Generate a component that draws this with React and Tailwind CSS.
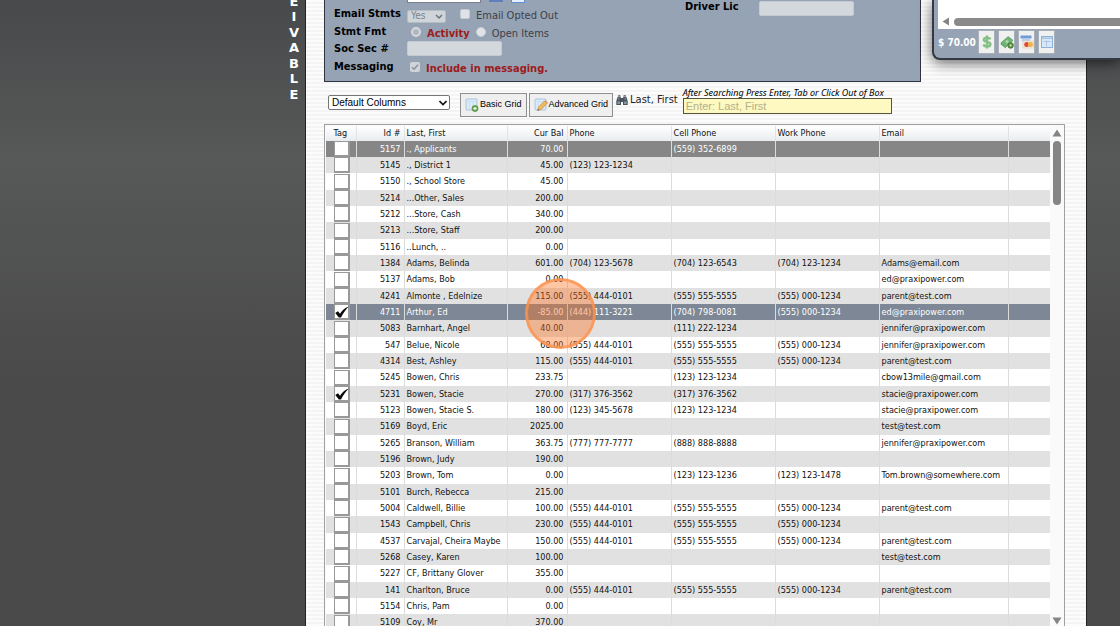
// ============================================================
// Accounts Receivable – Customer Detail and Grid
// ============================================================

const customers = [
  { id: 5157, name: '., Applicants', bal: '70.00', cell: '(559) 352-6899', current: true },
  { id: 5145, name: '., District 1', bal: '45.00', phone: '(123) 123-1234' },
  { id: 5150, name: '., School Store', bal: '45.00' },
  { id: 5214, name: '...Other, Sales', bal: '200.00' },
  { id: 5212, name: '...Store, Cash', bal: '340.00' },
  { id: 5213, name: '...Store, Staff', bal: '200.00' },
  { id: 5116, name: '..Lunch, ..', bal: '0.00' },
  { id: 1384, name: 'Adams, Belinda', bal: '601.00', phone: '(704) 123-5678', cell: '(704) 123-6543', work: '(704) 123-1234', email: 'Adams@email.com' },
  { id: 5137, name: 'Adams, Bob', bal: '0.00', email: 'ed@praxipower.com' },
  { id: 4241, name: 'Almonte , Edelnize', bal: '115.00', phone: '(555) 444-0101', cell: '(555) 555-5555', work: '(555) 000-1234', email: 'parent@test.com' },
  { id: 4711, name: 'Arthur, Ed', bal: '-85.00', phone: '(444) 111-3221', cell: '(704) 798-0081', work: '(555) 000-1234', email: 'ed@praxipower.com', tagged: true, active: true },
  { id: 5083, name: 'Barnhart, Angel', bal: '40.00', cell: '(111) 222-1234', email: 'jennifer@praxipower.com' },
  { id: 547, name: 'Belue, Nicole', bal: '68.00', phone: '(555) 444-0101', cell: '(555) 555-5555', work: '(555) 000-1234', email: 'jennifer@praxipower.com' },
  { id: 4314, name: 'Best, Ashley', bal: '115.00', phone: '(555) 444-0101', cell: '(555) 555-5555', work: '(555) 000-1234', email: 'parent@test.com' },
  { id: 5245, name: 'Bowen, Chris', bal: '233.75', cell: '(123) 123-1234', email: 'cbow13mile@gmail.com' },
  { id: 5231, name: 'Bowen, Stacie', bal: '270.00', phone: '(317) 376-3562', cell: '(317) 376-3562', email: 'stacie@praxipower.com', tagged: true },
  { id: 5123, name: 'Bowen, Stacie S.', bal: '180.00', phone: '(123) 345-5678', cell: '(123) 123-1234', email: 'stacie@praxipower.com' },
  { id: 5169, name: 'Boyd, Eric', bal: '2025.00', email: 'test@test.com' },
  { id: 5265, name: 'Branson, William', bal: '363.75', phone: '(777) 777-7777', cell: '(888) 888-8888', email: 'jennifer@praxipower.com' },
  { id: 5196, name: 'Brown, Judy', bal: '190.00' },
  { id: 5203, name: 'Brown, Tom', bal: '0.00', cell: '(123) 123-1236', work: '(123) 123-1478', email: 'Tom.brown@somewhere.com' },
  { id: 5101, name: 'Burch, Rebecca', bal: '215.00' },
  { id: 5004, name: 'Caldwell, Billie', bal: '100.00', phone: '(555) 444-0101', cell: '(555) 555-5555', work: '(555) 000-1234', email: 'parent@test.com' },
  { id: 1543, name: 'Campbell, Chris', bal: '230.00', phone: '(555) 444-0101', cell: '(555) 555-5555', work: '(555) 000-1234' },
  { id: 4537, name: 'Carvajal, Cheira Maybe', bal: '150.00', phone: '(555) 444-0101', cell: '(555) 555-5555', work: '(555) 000-1234', email: 'parent@test.com' },
  { id: 5268, name: 'Casey, Karen', bal: '100.00', email: 'test@test.com' },
  { id: 5227, name: 'CF, Brittany Glover', bal: '355.00' },
  { id: 141, name: 'Charlton, Bruce', bal: '0.00', phone: '(555) 444-0101', cell: '(555) 555-5555', work: '(555) 000-1234', email: 'parent@test.com' },
  { id: 5154, name: 'Chris, Pam', bal: '0.00' },
  { id: 5109, name: 'Coy, Mr', bal: '370.00' },
];

const columns = [
  { label: 'Tag', width: 'w-[30px]', align: 'text-center' },
  { label: 'Id #', width: 'w-12', align: 'text-right' },
  { label: 'Last, First', width: 'w-[103px]', align: 'text-left' },
  { label: 'Cur Bal', width: 'w-[60px]', align: 'text-right' },
  { label: 'Phone', width: 'w-[104px]', align: 'text-left' },
  { label: 'Cell Phone', width: 'w-[104px]', align: 'text-left' },
  { label: 'Work Phone', width: 'w-[104px]', align: 'text-left' },
  { label: 'Email', width: 'w-[129px]', align: 'text-left' },
  { label: '', width: '', align: 'text-left' },
];

/* ---------- Icons ---------- */

function GridIcon({ children }) {
  return (
    <svg viewBox="0 0 14 14" className="size-3.5 shrink-0" aria-hidden="true">
      <rect x="1" y="1" width="11" height="11" rx="1" fill="#dcebf8" stroke="#a9c3de" />
      <path d="M1.5 3.5h10M4.5 3.5v8M8 3.5v8" stroke="#cbdff0" fill="none" />
      {children}
    </svg>
  );
}

function BasicGridIcon() {
  return (
    <GridIcon>
      <circle cx="10" cy="10.5" r="3" fill="#6fae55" stroke="#4c8a38" strokeWidth="0.8" />
      <path d="M8.4 10.5h3.2M10 8.9v3.2" stroke="#fff" strokeWidth="1.1" />
    </GridIcon>
  );
}

function AdvancedGridIcon() {
  return (
    <GridIcon>
      <path d="M3.5 12.5l1-3.5 6-6 2.7 2.2-6 6.2z" fill="#f0b95c" stroke="#c98f3c" strokeWidth="0.7" />
      <path d="M10.5 3l0.8-0.8 2.6 2.2-0.7 0.8z" fill="#d98b7a" />
      <path d="M3.5 12.5l0.5-1.6 1.2 1.1z" fill="#555" />
    </GridIcon>
  );
}

function BinocularsIcon() {
  return (
    <svg viewBox="0 0 12 12" className="size-3 shrink-0" aria-hidden="true">
      <path d="M1.8 2.5h3V4h2.4V2.5h3L11.7 7v4H7V8H5v3H0.3V7z" fill="#4a545e" />
      <path d="M2.2 1h2.2v1.2H2.2zM7.6 1h2.2v1.2H7.6z" fill="#6d7882" />
      <path d="M1.4 7.5h2.5v2.4H1.4zM8.1 7.5h2.5v2.4H8.1z" fill="#8c98a3" />
      <path d="M2.8 3.5v2.6M9.2 3.5v2.6" stroke="#9aa6b0" strokeWidth="0.7" />
    </svg>
  );
}

function DollarIcon() {
  return (
    <svg viewBox="0 0 14 14" className="size-3.5" aria-hidden="true">
      <path d="M10.3 4.4C9.8 3 8.6 2.6 7 2.6c-1.9 0-3.2.8-3.2 2.1C3.8 7.6 10.4 6 10.4 9.2c0 1.4-1.4 2.3-3.4 2.3-1.9 0-3.1-.7-3.5-2.1M7 0.6v12.8" fill="none" stroke="#84c083" strokeWidth="2.4" />
    </svg>
  );
}

function CashAddIcon() {
  return (
    <svg viewBox="0 0 14 14" className="size-3.5" aria-hidden="true">
      <path d="M0.8 8l7.4-6.4 4.8 3.8-7.2 6.8z" fill="#6fb573" stroke="#4d9853" strokeWidth="0.7" />
      <path d="M0.8 8v1.6l5 4v-1.4z" fill="#5c9f60" />
      <circle cx="7" cy="6.7" r="1.6" fill="#a5d6a4" />
      <circle cx="10.6" cy="10.4" r="2.8" fill="#5a8f43" stroke="#41702e" strokeWidth="0.7" />
      <circle cx="10.6" cy="10.4" r="1.1" fill="#cfe3c4" />
    </svg>
  );
}

function CardIcon() {
  return (
    <svg viewBox="0 0 14 14" className="size-3.5" aria-hidden="true">
      <rect x="0.5" y="0.5" width="11" height="3" fill="#6f9bd6" />
      <path d="M2 3.5h8v3H2z" fill="#b9cfee" />
      <rect x="3" y="6" width="10.5" height="7" rx="0.5" fill="#f4ead4" stroke="#d7cdb8" strokeWidth="0.6" />
      <circle cx="6.7" cy="9.5" r="2.5" fill="#dc4a3c" />
      <circle cx="10.4" cy="9.5" r="2.5" fill="#f0b04a" />
    </svg>
  );
}

function FormIcon() {
  return (
    <svg viewBox="0 0 14 14" className="size-3.5" aria-hidden="true">
      <rect x="1.5" y="1.5" width="11" height="11" fill="#d8e8f8" stroke="#8db0d8" />
      <path d="M2 3.2h10" stroke="#a7c5e6" strokeWidth="1.5" />
      <path d="M3.5 6.5h7M6.5 5.5v6" stroke="#a9c6e6" />
    </svg>
  );
}

function CheckMark() {
  return (
    <svg viewBox="0 0 14 14" className="pointer-events-none absolute left-px top-px size-3.5" aria-hidden="true">
      <path d="M0.3 8L3 6.2 5 8.8C7 5.5 9.5 2.8 13.8 1.5 10.5 4.8 8 8.5 6 12.5H3.8z" fill="#0a0a0a" />
    </svg>
  );
}

/* ---------- Detail panel ---------- */

const fieldBox = 'h-[15px] w-[95px] rounded-xs border border-[#c3cad1] bg-[#d3d8dd]';

function DetailPanel() {
  return (
    <section className="mr-[165px] flex border border-t-0 border-[#2e3540] bg-[#96a3b4] pb-1 pl-[9px] font-['DejaVu_Sans_Condensed','Noto_Sans',sans-serif] text-[11px] leading-4 text-[#3c4148]">
      <div className="grid grow grid-cols-[73px_1fr] grid-rows-[5px_18px_17px_17px_20px] items-center">
        <span />
        <div className="flex h-full items-start gap-2">
          <input aria-label="Email" className="h-[3px] w-[74px] border border-t-0 border-[#767f8a] bg-white" />
          <span className="h-0.5 w-3.5 bg-[#5f7fc0]" />
          <span className="h-[3px] w-3.5 border border-t-0 border-[#5f8fd0] bg-[#e6f0fb]" />
        </div>

        <label htmlFor="stmts" className="font-bold text-black">Email Stmts</label>
        <div className="flex items-center">
          <div className="relative mt-1 flex">
            <select id="stmts" disabled className="h-[13px] w-[39px] appearance-none rounded-xs border border-[#b4bcc5] bg-[#d0d5da] pl-[3px] text-[10px] leading-none text-[#7c838b]">
              <option>Yes</option>
            </select>
            <svg viewBox="0 0 8 6" className="pointer-events-none absolute right-[3px] top-1 h-1.5 w-2" aria-hidden="true">
              <path d="M1 1l3 3 3-3" fill="none" stroke="#6c737b" strokeWidth="1.5" />
            </svg>
          </div>
          <input id="optout" type="checkbox" className="ml-3.5 size-2.5 appearance-none rounded-xs border border-[#c3cad1] bg-[#dfe3e7]" />
          <label htmlFor="optout" className="ml-1.5 mt-1">Email Opted Out</label>
        </div>

        <span className="font-bold text-black">Stmt Fmt</span>
        <div className="flex items-center pl-1">
          <input id="activity" type="radio" name="fmt" disabled className="size-2.5 appearance-none rounded-full border-2 border-[#d6dadf] bg-[#b0b7bf]" />
          <label htmlFor="activity" className="ml-1.5 mt-1 font-bold text-[#9c1b1b]">Activity</label>
          <input id="items" type="radio" name="fmt" className="ml-1.5 size-2.5 appearance-none rounded-full border border-[#c9ced4] bg-[#dfe3e7]" />
          <label htmlFor="items" className="ml-1.5 mt-1">Open Items</label>
        </div>

        <label htmlFor="ssn" className="font-bold text-black">Soc Sec #</label>
        <input id="ssn" disabled className={fieldBox} />

        <span className="font-bold text-black">Messaging</span>
        <div className="flex items-center pl-[3px]">
          <span className="relative flex">
            <input id="messaging" type="checkbox" defaultChecked disabled className="size-2.5 appearance-none rounded-xs bg-[#d0d4d8]" />
            <svg viewBox="0 0 10 10" className="pointer-events-none absolute left-0 top-0 size-2.5" aria-hidden="true">
              <path d="M2 5.2l2 2 4-4.5" fill="none" stroke="#8b9299" strokeWidth="1.5" />
            </svg>
          </span>
          <label htmlFor="messaging" className="ml-1.5 mt-1 font-bold text-[#9c1b1b]">Include in messaging.</label>
        </div>
      </div>

      <div className="flex w-[235px] items-start">
        <label htmlFor="license" className="w-[74px] leading-[14px] font-bold text-black">Driver Lic</label>
        <input id="license" disabled className={`mt-px ${fieldBox}`} />
      </div>
    </section>
  );
}

/* ---------- Toolbar ---------- */

const gridButton = 'flex h-6 items-center gap-px whitespace-nowrap border border-[#8f8f8f] bg-[#efefef] px-1 text-[9px] text-black';

function Toolbar() {
  return (
    <div className="flex h-[42px] items-start pl-1 pt-[5px] font-['Liberation_Sans',sans-serif]">
      <div className="relative mt-2 flex">
        <select aria-label="Columns" className="h-[15px] w-[122px] appearance-none rounded-xs border border-[#767676] bg-white pl-[3px] text-[10px] leading-none text-black">
          <option>Default Columns</option>
        </select>
        <svg viewBox="0 0 8 6" className="pointer-events-none absolute right-[3px] top-[5px] h-1.5 w-2" aria-hidden="true">
          <path d="M0.5 1L4 4.5 7.5 1" fill="none" stroke="#111" strokeWidth="1.6" />
        </svg>
      </div>
      <div className="ml-2.5 mt-1.5 flex gap-0.5">
        <button type="button" className={gridButton}><BasicGridIcon />Basic Grid</button>
        <button type="button" className={gridButton}><AdvancedGridIcon />Advanced Grid</button>
      </div>
      <div className="ml-[3px] mt-[5px] flex items-center gap-0.5 whitespace-nowrap font-['DejaVu_Sans_Condensed','Noto_Sans',sans-serif] text-[11px] leading-4 text-[#222]">
        <BinocularsIcon />
        Last, First
      </div>
      <div className="ml-[5px] flex flex-col">
        <label htmlFor="search" className="whitespace-nowrap font-['Noto_Sans',sans-serif] text-[9px] leading-[11px] italic text-black">
          After Searching Press Enter, Tab or Click Out of Box
        </label>
        <input id="search" placeholder="Enter: Last, First" className="h-4 w-[209px] border border-[#55553f] bg-[#fdf9c0] px-0.5 text-[11px] placeholder:text-[#b3b08c]" />
      </div>
    </div>
  );
}

/* ---------- Customer grid ---------- */

function rowColour(c, i) {
  if (c.current) return 'bg-[#868686] text-white';
  if (c.active) return 'bg-[#7d8795] text-white';
  return i % 2 ? 'bg-[#e1e1e1]' : 'bg-white';
}

function CustomerRow({ customer: c, index }) {
  const cell = 'overflow-hidden border-l border-[#dcdcdc] p-0 pl-0.5';
  return (
    <tr className={`h-4 nth-[3n]:h-[17px] ${rowColour(c, index)}`}>
      <td className="p-0">
        <span className="relative ml-2 flex size-4">
          <input type="checkbox" aria-label={`Tag ${c.name}`} defaultChecked={c.tagged} className="size-4 appearance-none border border-b-2 border-r-2 border-[#999] bg-white" />
          {c.tagged && <CheckMark />}
        </span>
      </td>
      <td className="border-l border-[#dcdcdc] p-0 pr-[3px] text-right">{c.id}</td>
      <td className={cell}>{c.name}</td>
      <td className="border-l border-[#dcdcdc] p-0 pr-[3px] text-right">{c.bal}</td>
      <td className={cell}>{c.phone}</td>
      <td className={cell}>{c.cell}</td>
      <td className={cell}>{c.work}</td>
      <td className={cell}>{c.email}</td>
      <td className={cell} />
    </tr>
  );
}

function CustomerGrid() {
  return (
    <div className="mr-[21px] flex border border-[#a0a0a0] bg-[#fafafa] pl-px pt-px">
      <table className="grow table-fixed border-collapse whitespace-nowrap font-['DejaVu_Sans_Condensed','Noto_Sans',sans-serif] text-[9px] leading-[13px] text-[#111]">
        <thead>
          <tr className="h-[15px] bg-linear-to-b from-white to-[#e9ecef]">
            {columns.map((col) => (
              <th key={col.label} className={`border-l border-[#e2e2e2] p-0 pl-0.5 pr-[3px] font-normal first:border-l-0 ${col.width} ${col.align}`}>{col.label}</th>
            ))}
          </tr>
        </thead>
        <tbody>
          {customers.map((c, i) => <CustomerRow key={c.id} customer={c} index={i} />)}
        </tbody>
      </table>
      <div className="flex h-[500px] w-3.5 shrink-0 flex-col items-center pb-px pt-[3px]">
        <svg viewBox="0 0 10 8" className="h-2 w-2.5" aria-hidden="true"><path d="M5 0.5l4.5 7h-9z" fill="#858585" /></svg>
        <div className="mt-1 h-16 w-2 rounded-full bg-[#858585]" />
        <svg viewBox="0 0 10 8" className="mt-auto h-2 w-2.5" aria-hidden="true"><path d="M5 7.5l-4.5-7h9z" fill="#858585" /></svg>
      </div>
    </div>
  );
}

/* ---------- Floating balance window ---------- */

const iconButton = 'flex h-6 w-[17px] items-center justify-center border border-[#a9b0b8] bg-[#f0f0f0]';

function BalanceWindow() {
  return (
    <div className="absolute left-[932px] right-0 top-0 rounded-bl-lg border-b-2 border-l-2 border-[#333a44] bg-[#96a3b4] pb-1 pl-1 shadow-[0_3px_14px_rgba(0,0,0,0.6)]">
      <div className="flex h-[29px] items-end bg-white pb-[3px] pl-1">
        <svg viewBox="0 0 8 9" className="h-[9px] w-2 shrink-0" aria-hidden="true"><path d="M7 0.5v8l-6.5-4z" fill="#858585" /></svg>
        <div className="ml-1 h-2 grow rounded-l-full bg-[#8a8a8a]" />
      </div>
      <div className="flex items-center pt-px">
        <span className="w-10 whitespace-nowrap font-['DejaVu_Sans_Condensed','Noto_Sans',sans-serif] text-[10px] font-bold text-white">$ 70.00</span>
        <div className="flex gap-[3px]">
          <button type="button" aria-label="Payment" className={iconButton}><DollarIcon /></button>
          <button type="button" aria-label="Add cash" className={iconButton}><CashAddIcon /></button>
          <button type="button" aria-label="Card" className={iconButton}><CardIcon /></button>
          <button type="button" aria-label="Form" className={iconButton}><FormIcon /></button>
        </div>
      </div>
    </div>
  );
}

export default function App() {
  return (
    <div className="relative flex h-screen overflow-hidden bg-linear-to-b from-[#47494b] via-[#575958] via-25% to-[#4a4a4a] to-60%">
      <aside className="flex w-[305px] shrink-0 flex-col items-end pr-1.5 font-['DejaVu_Sans',sans-serif] text-[13px] font-bold text-white">
        <div className="-mt-[5px] flex flex-col items-center">
          {['E', 'I', 'V', 'A', 'B', 'L', 'E'].map((letter, i) => (
            <span key={i} className="h-[13px] leading-[13px] odd:mb-0.5 even:mb-[3px]">{letter}</span>
          ))}
        </div>
      </aside>
      <main className="grow border-x border-[#222] bg-[repeating-linear-gradient(to_bottom,#fcfcfc_0px,#fcfcfc_2px,#f4f4f4_2px,#f4f4f4_4px)] pl-[18px]">
        <DetailPanel />
        <Toolbar />
        <CustomerGrid />
      </main>
      <div className="w-[33px] shrink-0" />
      <BalanceWindow />
      {/* Click marker */}
      <div className="pointer-events-none absolute left-[525px] top-[278px] size-[71px] rounded-full border-3 border-[#fb9450]/80 bg-[#ff7020]/40" />
    </div>
  );
}
